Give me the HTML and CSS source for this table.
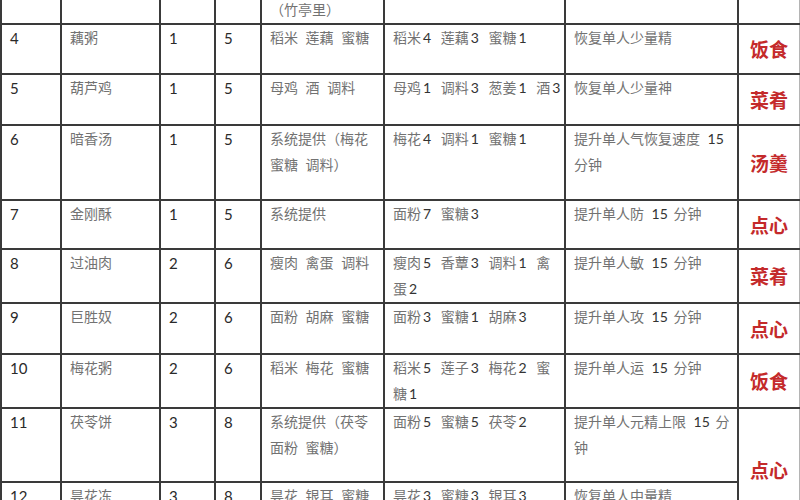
FILE: index.html
```html
<!DOCTYPE html>
<html lang="zh-CN">
<head>
<meta charset="utf-8">
<title>菜谱</title>
<link rel="stylesheet" href="styles.css">
</head>
<body>
<div class="sheet">
<table class="grid">
<colgroup>
<col class="c-id"><col class="c-name"><col class="c-a"><col class="c-b"><col class="c-src"><col class="c-ing"><col class="c-eff"><col class="c-tag">
</colgroup>
<tbody>
<tr class="r50">
<td class="num">3</td><td></td><td class="num"></td><td class="num"></td>
<td>系统提供<br>（竹亭里）</td><td class="ing"></td><td class="eff"></td><td class="tag"></td>
</tr>
<tr class="r50">
<td class="num">4</td><td>藕粥</td><td class="num">1</td><td class="num">5</td>
<td>稻米 莲藕 蜜糖</td>
<td class="ing">稻米<span class="n">4</span> 莲藕<span class="n">3</span> 蜜糖<span class="n">1</span></td>
<td class="eff">恢复单人少量精</td><td class="tag">饭食</td>
</tr>
<tr class="r51">
<td class="num">5</td><td>葫芦鸡</td><td class="num">1</td><td class="num">5</td>
<td>母鸡 酒 调料</td>
<td class="ing">母鸡<span class="n">1</span> 调料<span class="n">3</span> 葱姜<span class="n">1</span> 酒<span class="n">3</span></td>
<td class="eff">恢复单人少量神</td><td class="tag">菜肴</td>
</tr>
<tr class="r75">
<td class="num">6</td><td>暗香汤</td><td class="num">1</td><td class="num">5</td>
<td>系统提供（梅花<br>蜜糖 调料）</td>
<td class="ing">梅花<span class="n">4</span> 调料<span class="n">1</span> 蜜糖<span class="n">1</span></td>
<td class="eff">提升单人气恢复速度 <span class="n">15</span><br>分钟</td><td class="tag">汤羹</td>
</tr>
<tr class="r49">
<td class="num">7</td><td>金刚酥</td><td class="num">1</td><td class="num">5</td>
<td>系统提供</td>
<td class="ing">面粉<span class="n">7</span> 蜜糖<span class="n">3</span></td>
<td class="eff">提升单人防 <span class="n">15</span> 分钟</td><td class="tag">点心</td>
</tr>
<tr class="r51">
<td class="num">8</td><td>过油肉</td><td class="num">2</td><td class="num">6</td>
<td>瘦肉 禽蛋 调料</td>
<td class="ing">瘦肉<span class="n">5</span> 香蕈<span class="n">3</span> 调料<span class="n">1</span> 禽<br>蛋<span class="n">2</span></td>
<td class="eff">提升单人敏 <span class="n">15</span> 分钟</td><td class="tag">菜肴</td>
</tr>
<tr class="r51">
<td class="num">9</td><td>巨胜奴</td><td class="num">2</td><td class="num">6</td>
<td>面粉 胡麻 蜜糖</td>
<td class="ing">面粉<span class="n">3</span> 蜜糖<span class="n">1</span> 胡麻<span class="n">3</span></td>
<td class="eff">提升单人攻 <span class="n">15</span> 分钟</td><td class="tag">点心</td>
</tr>
<tr class="r52">
<td class="num">10</td><td>梅花粥</td><td class="num">2</td><td class="num">6</td>
<td>稻米 梅花 蜜糖</td>
<td class="ing">稻米<span class="n">5</span> 莲子<span class="n">3</span> 梅花<span class="n">2</span> 蜜<br>糖<span class="n">1</span></td>
<td class="eff">提升单人运 <span class="n">15</span> 分钟</td><td class="tag">饭食</td>
</tr>
<tr class="r74">
<td class="num">11</td><td>茯苓饼</td><td class="num">3</td><td class="num">8</td>
<td>系统提供（茯苓<br>面粉 蜜糖）</td>
<td class="ing">面粉<span class="n">5</span> 蜜糖<span class="n">5</span> 茯苓<span class="n">2</span></td>
<td class="eff">提升单人元精上限 <span class="n">15</span> 分<br>钟</td><td class="tag" rowspan="2">点心</td>
</tr>
<tr class="r50">
<td class="num">12</td><td>昙花冻</td><td class="num">3</td><td class="num">8</td>
<td>昙花 银耳 蜜糖</td>
<td class="ing">昙花<span class="n">3</span> 蜜糖<span class="n">3</span> 银耳<span class="n">3</span></td>
<td class="eff">恢复单人中量精</td>
</tr>
</tbody>
</table>
</div>
</body>
</html>
```

FILE: styles.css
```css
html, body {
  margin: 0;
  padding: 0;
  background: #ffffff;
}

.sheet {
  width: 800px;
  height: 500px;
  overflow: hidden;
}

.grid {
  border-collapse: collapse;
  table-layout: fixed;
  width: 799px;
  margin-top: -31px;
  font-family: "Lato", "Noto Sans CJK SC", sans-serif;
  font-size: 14px;
  color: #727272;
}

.c-id { width: 60px; }
.c-name { width: 99px; }
.c-a { width: 55px; }
.c-b { width: 46px; }
.c-src { width: 123px; }
.c-ing { width: 181px; }
.c-eff { width: 173px; }
.c-tag { width: 62px; }

.grid td {
  border: 2px solid #3a3a3a;
  padding: 0 0 0 8px;
  vertical-align: top;
  line-height: 26px;
  white-space: nowrap;
  overflow: hidden;
  word-spacing: 4px;
}

.grid td.num {
  color: #2a2a2a;
  font-size: 15px;
}

.grid td.ing {
  word-spacing: 6px;
}

.grid td.eff {
  word-spacing: 2px;
}

.n {
  color: #333333;
  margin-left: 2px;
  font-size: 14px;
}

.grid td.tag {
  padding: 0;
  text-align: center;
  vertical-align: middle;
  color: #c42a2b;
  border-right: 2px solid #b4b4b4;
  font-family: "Noto Sans CJK SC", sans-serif;
  font-weight: 700;
  font-size: 19px;
  letter-spacing: 0;
}

.r49 td { height: 47px; }
.r50 td { height: 48px; }
.r51 td { height: 49px; }
.r52 td { height: 50px; }
.r74 td { height: 72px; }
.r75 td { height: 73px; }
```
